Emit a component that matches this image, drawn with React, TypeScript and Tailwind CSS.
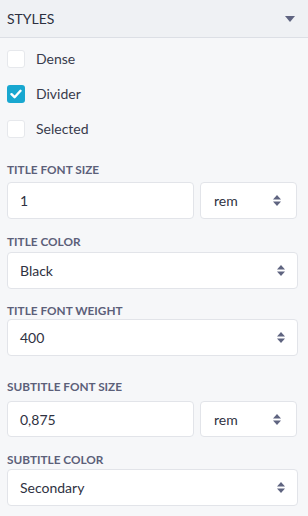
import React from 'react'

function Arrows() {
  return (
    <svg width="8" height="11" viewBox="0 0 8 11" className="shrink-0">
      <path d="M4 0 L8 4.5 H0 Z" fill="#5f6480" />
      <path d="M4 11 L8 6.5 H0 Z" fill="#5f6480" />
    </svg>
  )
}

function Checkbox({ label, checked }: { label: string; checked?: boolean }) {
  return (
    <div className="flex h-[35px] items-center">
      {checked ? (
        <div className="flex h-[18px] w-[18px] items-center justify-center rounded-[3px] bg-[#18a7d0]">
          <svg width="12" height="10" viewBox="0 0 12 10">
            <path d="M1.5 5.2 L4.6 8.2 L10.5 1.8" fill="none" stroke="#fff" strokeWidth="2.4" strokeLinecap="round" strokeLinejoin="round" />
          </svg>
        </div>
      ) : (
        <div className="h-[18px] w-[18px] rounded-[3px] border border-[#e6e8ec] bg-white" />
      )}
      <span className="ml-[11px] text-[14px] text-[#383b4c]">{label}</span>
    </div>
  )
}

function Label({ children, className = '' }: { children: React.ReactNode; className?: string }) {
  return (
    <div className={`text-[11.8px] font-bold leading-[12px] text-[#5c6079] ${className}`}>
      {children}
    </div>
  )
}

function Box({ value, arrows, className = '' }: { value: string; arrows?: boolean; className?: string }) {
  return (
    <div
      className={`flex items-center justify-between rounded-[4px] border border-[#e2e4e9] bg-white pl-[12px] text-[14px] text-[#2f3242] ${className}`}
    >
      <span>{value}</span>
      {arrows && <Arrows />}
    </div>
  )
}

export default function App() {
  return (
    <div className="h-[516px] w-[308px] bg-[#f6f7f9] font-['Lato',sans-serif]">
      <div className="flex h-[38px] items-center justify-between border-b border-[#dcdfe5] bg-[#eff1f4] pl-[7px] pr-[13px]">
        <span className="text-[14px] text-[#2d3040]">STYLES</span>
        <svg width="10" height="6" viewBox="0 0 10 6">
          <path d="M0 0 H10 L5 6 Z" fill="#5f6480" />
        </svg>
      </div>
      <div className="px-[7px] pt-[3px]">
        <Checkbox label="Dense" />
        <Checkbox label="Divider" checked />
        <Checkbox label="Selected" />

        <Label className="mt-[18px]">TITLE FONT SIZE</Label>
        <div className="mt-[6px] flex gap-[6px]">
          <Box value="1" className="h-[37px] w-[187px]" />
          <Box value="rem" arrows className="h-[37px] w-[97px] pl-[13px] pr-[15px]" />
        </div>

        <Label className="mt-[17px]">TITLE COLOR</Label>
        <Box value="Black" arrows className="mt-[4px] h-[37px] w-[291px] pr-[12px]" />

        <Label className="mt-[16px]">TITLE FONT WEIGHT</Label>
        <Box value="400" arrows className="mt-[2px] h-[37px] w-[291px] pr-[12px]" />

        <Label className="mt-[25px]">SUBTITLE FONT SIZE</Label>
        <div className="mt-[8px] flex gap-[6px]">
          <Box value="0,875" className="h-[36px] w-[187px]" />
          <Box value="rem" arrows className="h-[36px] w-[97px] pl-[13px] pr-[15px]" />
        </div>

        <Label className="mt-[17px]">SUBTITLE COLOR</Label>
        <Box value="Secondary" arrows className="mt-[3px] h-[37px] w-[291px] pr-[12px]" />
      </div>
    </div>
  )
}
